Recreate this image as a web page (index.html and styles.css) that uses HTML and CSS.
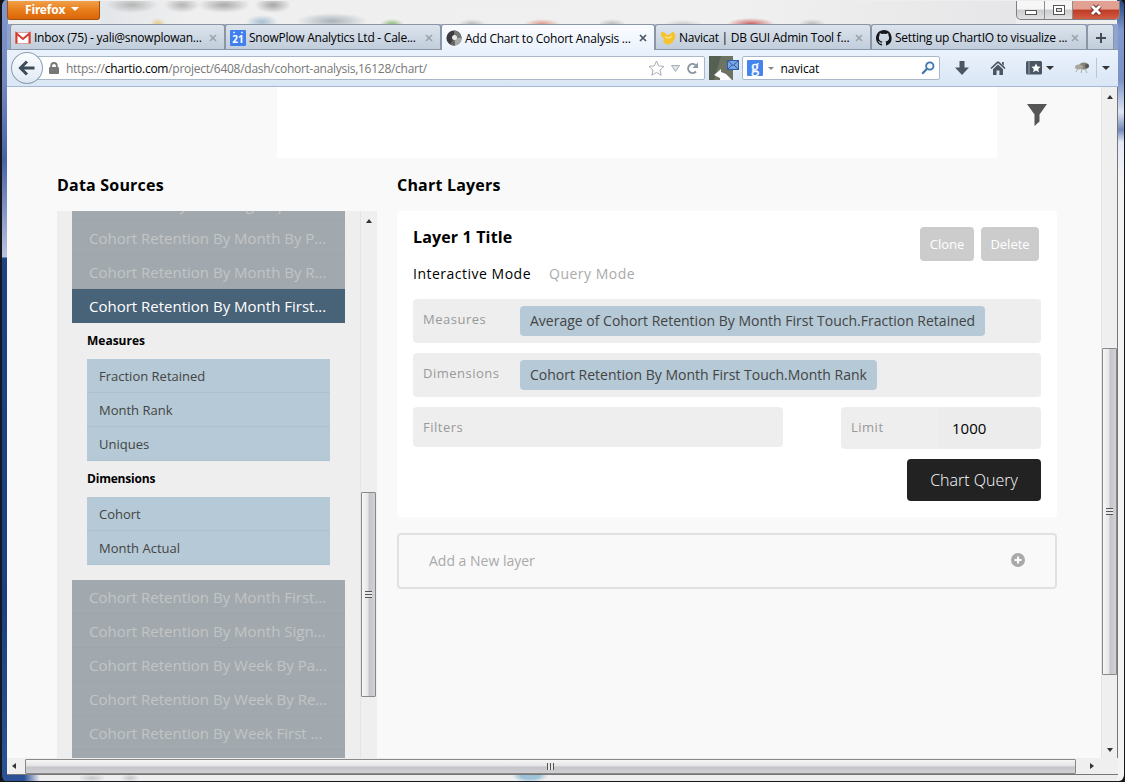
FILE: index.html
```html
<!DOCTYPE html>
<html lang="en">
<head>
<meta charset="utf-8">
<title>Add Chart to Cohort Analysis</title>
<link rel="stylesheet" href="styles.css">
</head>
<body>
<div class="window">
  <header class="titlebar">
    <div class="firefox-button">Firefox <i class="caret caret-white"></i></div>
    <div class="glass"></div>
    <div class="window-buttons">
      <span class="wb"><svg width="14" height="12" viewBox="0 0 14 12"><rect x="1.500" y="6.500" width="11" height="4" fill="#fff" stroke="#555"/></svg></span>
      <span class="wb"><svg width="14" height="12" viewBox="0 0 14 12"><rect x="1.500" y="1.500" width="11" height="9" fill="#fff" stroke="#555"/><rect x="4.500" y="4.500" width="5" height="3" fill="#ddd" stroke="#555"/></svg></span>
      <span class="wb wb-close"><svg width="14" height="12" viewBox="0 0 14 12"><path d="M3 2l8 8M11 2l-8 8" stroke="#6b3030" stroke-width="4.600"/><path d="M3 2l8 8M11 2l-8 8" stroke="#fff" stroke-width="2.800"/></svg></span>
    </div>
  </header>

  <nav class="tabs">
    <div class="tab">
      <svg width="16" height="16" viewBox="0 0 16 16"><rect x="0.500" y="2.500" width="15" height="11" fill="#fff" stroke="#d9a4a0"/><path d="M1.500 13.500v-10L8 9l6.500-5.500v10" fill="none" stroke="#d33f35" stroke-width="2"/></svg>
      <span class="tab-title">Inbox (75) - yali@snowplowan...</span><svg class="close" viewBox="0 0 8 8"><path d="M1 1l6 6M7 1l-6 6"/></svg>
    </div>
    <div class="tab">
      <svg width="16" height="16" viewBox="0 0 16 16"><rect width="16" height="16" rx="1" fill="#3f80ee"/><path d="M3 2.500h2M11 2.500h2" stroke="#cfe0ff" stroke-width="1.500"/><text x="8" y="13" text-anchor="middle" class="cal-day">21</text></svg>
      <span class="tab-title">SnowPlow Analytics Ltd - Cale...</span><svg class="close" viewBox="0 0 8 8"><path d="M1 1l6 6M7 1l-6 6"/></svg>
    </div>
    <div class="tab tab-active">
      <svg width="16" height="16" viewBox="0 0 16 16"><circle cx="8" cy="8" r="7.600" fill="#3c3c3e"/><path d="M8 8V.4A7.600 7.600 0 0 1 15.600 8z" fill="#777"/><path d="M8 8h7.600A7.600 7.600 0 0 1 9 15.500z" fill="#a9a9a9"/><path d="M8 8l1 7.500a7.600 7.600 0 0 1-5-1.200z" fill="#666"/><circle cx="8.500" cy="7.500" r="2.500" fill="#e8e8e8"/></svg>
      <span class="tab-title">Add Chart to Cohort Analysis ...</span><svg class="close" viewBox="0 0 8 8"><path d="M1 1l6 6M7 1l-6 6"/></svg>
    </div>
    <div class="tab">
      <svg width="16" height="16" viewBox="0 0 16 16"><path d="M1 2.500C3 1 5 2.500 6.500 4.500 9 5.500 11 4 12.500 1.500 14 2 15.500 4 15.300 6c-.3 4-3 8-7 8.500C4 14 2.500 11 4 8.500 2 8 .5 5 1 2.500z" fill="#f5c32c"/><path d="M5 6.500c2 2 5 2 7-.5" fill="none" stroke="#fbe38a" stroke-width="1.500"/></svg>
      <span class="tab-title">Navicat | DB GUI Admin Tool f...</span><svg class="close" viewBox="0 0 8 8"><path d="M1 1l6 6M7 1l-6 6"/></svg>
    </div>
    <div class="tab">
      <svg width="16" height="16" viewBox="0 0 16 16"><path fill="#14181c" d="M8 0C3.600 0 0 3.600 0 8c0 3.500 2.300 6.500 5.500 7.600.4.100.5-.2.500-.4v-1.500c-2.200.5-2.700-1-2.700-1-.4-.9-.9-1.200-.9-1.200-.7-.5.100-.5.100-.5.800.1 1.200.8 1.200.8.700 1.200 1.900.9 2.300.7.100-.5.300-.9.500-1.100-1.800-.2-3.600-.9-3.600-4 0-.9.300-1.600.8-2.100-.1-.2-.4-1 .1-2.100 0 0 .7-.2 2.200.8a7.500 7.500 0 0 1 4 0c1.500-1 2.200-.8 2.200-.8.400 1.100.2 1.900.1 2.100.5.600.8 1.300.8 2.100 0 3.100-1.900 3.700-3.700 3.900.3.300.6.800.6 1.500v2.200c0 .2.100.5.600.4A8 8 0 0 0 8 0z"/></svg>
      <span class="tab-title">Setting up ChartIO to visualize ...</span><svg class="close" viewBox="0 0 8 8"><path d="M1 1l6 6M7 1l-6 6"/></svg>
    </div>
    <div class="tab tab-new"><svg width="12" height="12" viewBox="0 0 12 12"><path d="M6 1v10M1 6h10" stroke="#444c56" stroke-width="2"/></svg></div>
  </nav>

  <div class="toolbar">
    <div class="back"><svg width="18" height="16" viewBox="0 0 18 16"><path d="M9 1.500L2.500 8 9 14.500M3 8h13.500" fill="none" stroke="#3d4a57" stroke-width="3"/></svg></div>
    <div class="url">
      <svg width="10" height="12" viewBox="0 0 10 12"><path d="M2.200 6V3.800a2.800 2.800 0 0 1 5.600 0V6" fill="none" stroke="#777" stroke-width="1.800"/><rect y="5" width="10" height="7" rx="1" fill="#777"/></svg>
      <span class="address">https://<b>chartio.com</b>/project/6408/dash/cohort-analysis,16128/chart/</span>
      <svg width="17" height="16" viewBox="0 0 17 16"><path d="M8.500 1l2.200 4.900 5.300.5-4 3.600 1.200 5.200-4.700-2.800-4.700 2.800L5 10 1 6.400l5.300-.5z" fill="#fff" stroke="#a9afb6"/></svg>
      <svg width="9" height="7" viewBox="0 0 9 7"><path d="M.5.500h8l-4 6z" fill="#dfe3e7" stroke="#a5adb5"/></svg>
      <svg width="13" height="13" viewBox="0 0 13 13"><path d="M10 9.500A4.500 4.500 0 1 1 9.500 3" fill="none" stroke="#8b97a3" stroke-width="2"/><path d="M12 .5v5.500H6.500z" fill="#8b97a3"/></svg>
    </div>
    <svg class="page-icon" width="30" height="24" viewBox="0 0 30 24"><rect width="24" height="24" fill="#6c7461"/><path d="M0 0h12L5 24H0z" fill="#566052"/><path d="M5 19l7-6v3l5 2 6 6H11v-2z" fill="#fff"/><rect x="18.500" y="4.500" width="11" height="9" fill="#7aa5e3" stroke="#2f5ca6"/><path d="M19 5l5 4.500L29 5M19 13l4-4M29 13l-4-4" fill="none" stroke="#2f5ca6"/></svg>
    <div class="search">
      <svg width="16" height="16" viewBox="0 0 16 16"><rect width="16" height="16" rx="1" fill="#4583ed"/><text x="8" y="12" text-anchor="middle" class="g-letter">g</text></svg>
      <i class="caret caret-grey"></i>
      <span class="query">navicat</span>
      <svg width="14" height="14" viewBox="0 0 14 14"><circle cx="8.800" cy="5" r="3.700" fill="#f4f9ff" stroke="#3f76ad" stroke-width="1.800"/><path d="M6 7.800L1.200 12.800" stroke="#3f76ad" stroke-width="2.200"/></svg>
    </div>
    <div class="actions">
      <svg width="14" height="14" viewBox="0 0 14 14"><path d="M4.500 0h5v6.500H14L7 14 0 6.500h4.500z" fill="#4c5663"/></svg>
      <svg width="16" height="14" viewBox="0 0 16 14"><path d="M8 .8L1 7.500M8 .8L15 7.500" stroke="#4c5663" stroke-width="1.700"/><path d="M8 3.500L3 8.300V14h3.600V9.500h2.800V14H13V8.300zM12 1h1.800v4L12 3z" fill="#4c5663"/></svg>
      <svg width="17" height="14" viewBox="0 0 17 14"><rect width="16" height="13.500" rx="1.500" fill="#4c5663"/><path d="M3 0v14" stroke="#99a2ad"/><path d="M10 2.500l1.400 3 3.200.3-2.400 2.200.7 3.200L10 9.600l-2.900 1.600.7-3.200-2.400-2.200 3.200-.3z" fill="#fff"/></svg>
      <i class="caret"></i>
      <svg class="fly" width="16" height="14" viewBox="0 0 16 14"><ellipse cx="10" cy="5" rx="5" ry="3.500" fill="#85827c"/><ellipse cx="5" cy="6" rx="4" ry="2.500" fill="#aaa59d"/><circle cx="13" cy="5" r="2" fill="#555"/><path d="M4 7l-2 4M8 8l-1 4M11 8l2 4" stroke="#b0ada6"/></svg>
      <span class="divider"></span>
      <i class="caret"></i>
    </div>
  </div>

  <div class="viewport">
    <main class="page">
      <div class="preview-row">
        <div class="preview"></div>
        <svg class="funnel" width="20" height="22" viewBox="0 0 20 22"><path d="M0 0h20l-7.500 10.500v7L7.500 22V10.500z" fill="#555"/></svg>
      </div>
      <div class="columns">
        <section class="sources">
          <h2>Data Sources</h2>
          <div class="source-panel">
            <div class="source-list">
              <div class="tables tables-above">
                <div class="table">Cohort Dfn By Week Sign Up...</div>
                <div class="table">Cohort Retention By Month By P...</div>
                <div class="table">Cohort Retention By Month By R...</div>
              </div>
              <div class="table table-selected">Cohort Retention By Month First...</div>
              <h4>Measures</h4>
              <ul><li>Fraction Retained</li><li>Month Rank</li><li>Uniques</li></ul>
              <h4 class="dims">Dimensions</h4>
              <ul><li>Cohort</li><li>Month Actual</li></ul>
              <div class="tables tables-below">
                <div class="table">Cohort Retention By Month First...</div>
                <div class="table">Cohort Retention By Month Sign...</div>
                <div class="table">Cohort Retention By Week By Pa...</div>
                <div class="table">Cohort Retention By Week By Re...</div>
                <div class="table">Cohort Retention By Week First ...</div>
                <div class="table"></div>
              </div>
            </div>
            <div class="vscroll inner">
              <i class="arrow up"></i>
              <div class="thumb"><i class="grip"></i></div>
            </div>
          </div>
        </section>
        <section class="layers">
          <h2>Chart Layers</h2>
          <div class="card">
            <div class="card-head">
              <h3>Layer 1 Title</h3>
              <span class="btn clone">Clone</span><span class="btn delete">Delete</span>
            </div>
            <div class="modes"><span>Interactive Mode</span><span class="off">Query Mode</span></div>
            <div class="field"><label>Measures</label><span class="pill p1">Average of Cohort Retention By Month First Touch.Fraction Retained</span></div>
            <div class="field"><label>Dimensions</label><span class="pill p2">Cohort Retention By Month First Touch.Month Rank</span></div>
            <div class="field-row">
              <div class="field filters"><label>Filters</label></div>
              <div class="field limit"><label>Limit</label><span class="value">1000</span></div>
            </div>
            <div class="submit">Chart Query</div>
          </div>
          <div class="add-layer"><span>Add a New layer</span>
            <svg width="14" height="14" viewBox="0 0 14 14"><circle cx="7" cy="7" r="7" fill="#aaa"/><path d="M7 3.500v7M3.500 7h7" stroke="#fff" stroke-width="2"/></svg>
          </div>
        </section>
      </div>
    </main>
    <div class="vscroll outer">
      <i class="arrow up"></i>
      <div class="thumb"><i class="grip"></i></div>
      <i class="arrow down"></i>
    </div>
  </div>
  <div class="hscroll">
    <i class="arrow left"></i>
    <div class="hthumb"><i class="grip grip-h"></i></div>
    <i class="arrow right"></i>
  </div>
</div>
</body>
</html>
```

FILE: styles.css
```css
* { box-sizing: border-box; }
body {
  margin: 0;
  width: 1125px;
  height: 782px;
  overflow: hidden;
  background: #15171d;
  font-family: "Open Sans", sans-serif;
  color: #000;
}
svg { display: block; flex: none; }
h2, h3, h4, ul { margin: 0; padding: 0; list-style: none; }

/* window frame */
.window {
  width: 1125px;
  height: 781px;
  display: flex;
  flex-direction: column;
  padding: 1px 6px 0 5px;
  border: 0 solid #15171d;
  border-width: 0 1px 0 2px;
  border-radius: 6px;
  background:
    linear-gradient(90deg, #2b5297 0 22px, transparent 38px) 0 100% / 100% 6px no-repeat,
    radial-gradient(ellipse 18px 6px at 528px 1px, #9cc3d8 50%, transparent) 0 100% / 100% 6px no-repeat,
    radial-gradient(ellipse 14px 4px at 90px 3px, #c4c6ca, transparent) 0 100% / 100% 6px no-repeat,
    radial-gradient(ellipse 10px 4px at 128px 3px, #c4c6ca, transparent) 0 100% / 100% 6px no-repeat,
    linear-gradient(#8196cb 0, #7489c2 80px, #4763a6 160px, #bcc2e0 257px, #1c4484 258px, #1c3f83 600px, #2b5297 100%) 0 0 / 6px 100% no-repeat,
    linear-gradient(#23447f 0, #8199cd 30px, #7b92c8 80px, #dde6f5 112px, #7088b6 130px, #e4eaf5 142px, #f3f4f6 180px, #f3f3f3 100%) 100% 0 / 7px 100% no-repeat,
    #eeeeee;
  background-clip: padding-box;
}

.titlebar {
  height: 23px;
  display: flex;
  align-items: flex-start;
  justify-content: space-between;
  font-family: "Noto Sans", sans-serif;
}
.firefox-button {
  width: 93px;
  height: 19px;
  display: flex;
  align-items: center;
  gap: 6px;
  padding: 0 0 2px 17px;
  border: 1px solid #a5500d;
  border-top: 0;
  border-radius: 0 0 3px 3px;
  background: linear-gradient(#f0a04a, #e87d1b 50%, #da6608);
  color: #fff;
  font-size: 12px;
  font-weight: 700;
  letter-spacing: -0.15px;
  white-space: nowrap;
}
.glass {
  flex: 1;
  align-self: stretch;
  background:
    radial-gradient(ellipse 26px 8px at 32px 4px, #b5b5b5, transparent),
    radial-gradient(ellipse 18px 8px at 82px 4px, #b5b5b5, transparent),
    radial-gradient(ellipse 26px 8px at 124px 4px, #aaa, transparent),
    radial-gradient(ellipse 18px 8px at 173px 4px, #a6a6a6, transparent),
    radial-gradient(ellipse 16px 7px at 162px 21px, #a5bfd2, transparent),
    radial-gradient(ellipse 8px 6px at 58px 23px, #e5cc82, transparent),
    radial-gradient(ellipse 36px 8px at 232px 20px, #a9b3ba, transparent),
    radial-gradient(ellipse 12px 5px at 292px 23px, #8fba77, transparent),
    radial-gradient(ellipse 14px 5px at 372px 23px, #bbb, transparent),
    radial-gradient(ellipse 18px 5px at 442px 23px, #dc9789, transparent),
    radial-gradient(ellipse 14px 5px at 512px 23px, #bbb, transparent),
    radial-gradient(ellipse 20px 4px at 583px 23px, #ccc, transparent),
    radial-gradient(ellipse 24px 6px at 651px 23px, #c9605e, transparent),
    radial-gradient(ellipse 14px 5px at 712px 23px, #bbb, transparent),
    linear-gradient(90deg, #e3e6ea, #efefef 90px, #f0f0f0 70%, #e6e6e8);
}
.window-buttons {
  display: flex;
  height: 19px;
  margin-right: -2px;
  border: 1px solid #7b7f86;
  border-top: 0;
  border-radius: 0 0 5px 5px;
  overflow: hidden;
  background: linear-gradient(#f6f6f6 45%, #cbcccf 50%, #e2e2e3);
}
.wb { width: 28px; display: flex; align-items: center; justify-content: center; border-right: 1px solid #8b8e94; }
.wb-close { width: 46px; border: 0; background: linear-gradient(#e2a092 45%, #c03b27 50%, #d25c41); }

/* tabs */
.tabs { display: flex; height: 26px; padding-left: 3px; background: linear-gradient(90deg, #8fa3cf, #aeb8ce 40%, #d5d6db 92%, #8fa2cf); border-bottom: 1px solid #8a96a5; }
.tab {
  display: flex;
  align-items: center;
  flex: none;
  width: 216px;
  height: 25px;
  padding: 1px 7px 0 4px;
  gap: 3px;
  border: 1px solid #8a96a5;
  border-bottom: 0;
  border-radius: 3px 3px 0 0;
  background: linear-gradient(#dce4ed, #c1cddb);
  font-size: 12px;
}
.tab:first-child { width: 215px; }
.tab:nth-child(3) { width: 214px; }
.tab-active { height: 26px; background: linear-gradient(#fafcff, #eaf2fc); }
.tab-new { width: 27px; justify-content: center; padding: 1px 0 0; }
.tab-title { flex: 1; white-space: nowrap; letter-spacing: -0.24px; }
.close { width: 8px; height: 8px; fill: none; stroke: #9aa3ad; stroke-width: 1.7; }
.tab-active .close { stroke: #4c5561; }
.cal-day { font: 700 10px "Open Sans", sans-serif; fill: #fff; }
.g-letter { font: 16px "Liberation Serif", serif; fill: #fff; stroke: #fff; stroke-width: 0.4px; }

/* toolbar */
.toolbar {
  display: flex;
  align-items: center;
  height: 37px;
  padding: 0 8px 0 4px;
  background: linear-gradient(#eaf2fc, #d9e6f5);
  border-bottom: 1px solid #a4b8d4;
  font-size: 12px;
}
.back {
  position: relative;
  z-index: 1;
  width: 32px;
  height: 32px;
  display: flex;
  align-items: center;
  justify-content: center;
  border: 1px solid #8c9db1;
  border-radius: 50%;
  background: linear-gradient(#fbfdff, #dfe9f4);
}
.url, .search { display: flex; align-items: center; height: 24px; background: #fff; border: 1px solid #a9b8c9; border-radius: 2px; }
.url { width: 680px; margin-left: -16px; padding: 0 5px 0 21px; gap: 6px; }
.address { flex: 1; margin-left: 1px; color: #777; white-space: nowrap; letter-spacing: -0.27px; }
.address b { color: #000; font-weight: 400; }
.page-icon { margin: 0 3px 0 4px; }
.search { width: 198px; padding: 0 4px; gap: 5px; }
.query { flex: 1; margin-left: 1px; letter-spacing: -0.15px; }
.actions { display: flex; align-items: center; flex: 1; padding-left: 15px; }
.actions svg:nth-child(2) { margin-left: 21px; }
.actions svg:nth-child(3) { margin: 0 3px 0 20px; }
.actions .fly { margin: 0 6px 0 20px; }
.divider { width: 1px; height: 20px; margin-right: 5px; background: #b9c6d6; }
.caret { width: 0; height: 0; border: 4px solid transparent; border-top-color: #333; border-bottom: 0; }
.caret-white { border-top-color: #fff; }
.caret-grey { border-width: 3px; border-bottom: 0; border-top-color: #888; }

/* page */
.viewport { display: flex; height: 671px; background: #f9f9f9; }
.page { flex: 1; overflow: hidden; }
.preview-row { display: flex; align-items: flex-start; height: 71px; padding-left: 270px; }
.preview { width: 720px; height: 71px; background: #fff; }
.funnel { margin: 17px 0 0 30px; }
.columns { display: flex; gap: 20px; padding-left: 50px; }
h2 { height: 53px; padding-top: 15px; font-size: 16px; line-height: 24px; font-weight: 700; letter-spacing: 0.2px; }
.sources { width: 320px; }
.source-panel { display: flex; height: 547px; overflow: hidden; background: #eee; }
.source-list { width: 303px; padding: 0 15px; }
.tables { background: #a1a9af; color: #c3c4c4; }
.tables-above { height: 78px; display: flex; flex-direction: column; justify-content: flex-end; overflow: hidden; }
.tables-below { margin-top: 15px; }
.table { flex: none; height: 34px; padding-left: 17px; border-bottom: 1px solid #9da5ab; font-size: 15px; line-height: 34px; white-space: nowrap; }
.table-selected { background: #486277; border: 0; color: #fff; }
h4 { height: 36px; padding-left: 15px; font-size: 12px; line-height: 36px; }
.dims { letter-spacing: -0.2px; }
.source-list ul { margin: 0 15px; background: #b5c9d6; }
.source-list li { height: 34px; padding-left: 12px; border-bottom: 1px solid #adc2d0; font-size: 13px; line-height: 35px; color: #444; }

.layers { width: 660px; }
.card { height: 306px; padding: 15px 16px 16px; background: #fff; border-radius: 4px; }
.card-head { display: flex; height: 35px; }
h3 { flex: 1; font-size: 16px; line-height: 22px; letter-spacing: 0.15px; }
.btn { height: 34px; margin-top: 1px; border-radius: 4px; background: #ccc; color: #fff; font-size: 13px; line-height: 35px; text-align: center; }
.clone { width: 54px; margin-right: 7px; }
.delete { width: 58px; margin-right: 2px; }
.modes { display: flex; gap: 18px; height: 38px; font-size: 14px; line-height: 25px; letter-spacing: 0.5px; }
.off { color: #aaa; }
.field { display: flex; height: 44px; margin-bottom: 10px; padding: 7px 10px; border-radius: 4px; background: #eee; }
.field label { width: 97px; font-size: 13px; line-height: 26px; letter-spacing: 0.5px; color: #999; }
.pill { height: 30px; padding: 0 10px; border-radius: 4px; background: #b5c9d6; color: #444; font-size: 14px; line-height: 30px; white-space: nowrap; }
.p1 { width: 465px; }
.p2 { width: 357px; }
.field-row { display: flex; justify-content: space-between; align-items: flex-start; height: 52px; }
.filters { width: 370px; height: 40px; }
.limit { width: 200px; height: 42px; background: linear-gradient(90deg, #eee 97px, #ececec 97px); }
.limit label { width: 101px; }
.value { font-size: 15px; line-height: 28px; }
.submit { width: 134px; height: 42px; margin-left: auto; border-radius: 4px; background: #222; color: #fff; font-size: 16px; font-weight: 300; line-height: 42px; text-align: center; }
.add-layer { display: flex; align-items: center; justify-content: space-between; height: 56px; margin-top: 16px; padding: 0 30px 2px; border: 2px solid #e1e1e1; border-radius: 4px; color: #aaa; font-size: 14px; }

/* scrollbars */
.vscroll { display: flex; flex-direction: column; align-items: center; flex: none; background: #efefef; border-left: 1px solid #e4e4e4; }
.inner { width: 17px; padding-right: 1px; }
.outer { width: 17px; height: 672px; border-right: 1px solid #777; }
.thumb { display: flex; align-items: center; justify-content: center; width: 15px; border: 1px solid #888; border-radius: 1px; background: linear-gradient(90deg, #f6f6f6, #e6e6e8 45%, #c4c4ca 55%, #d2d2d6); }
.inner .thumb { height: 205px; margin-top: 267px; }
.outer .thumb { height: 327px; margin-top: 247px; margin-bottom: 73px; }
.grip { width: 7px; height: 7px; background: repeating-linear-gradient(#555 0 1px, #e8e8e8 1px 3px); }
.grip-h { width: 7px; height: 7px; background: repeating-linear-gradient(90deg, #555 0 1px, #e8e8e8 1px 3px); }
.arrow { flex: none; width: 0; height: 0; border: 3.5px solid transparent; }
.up { margin-top: 8px; border-top: 0; border-bottom: 4px solid #333; margin-bottom: 2px; }
.down { border-bottom: 0; border-top: 4px solid #333; }
.left { border-left: 0; border-right: 4px solid #333; margin: 0 9px 0 5px; }
.right { border-right: 0; border-left: 4px solid #333; margin-left: 14px; }
.hscroll { display: flex; align-items: center; height: 17px; background: #efefef; border-bottom: 1px solid #777; }
.hthumb { display: flex; align-items: center; justify-content: center; width: 1051px; height: 15px; border: 1px solid #888; border-radius: 1px; background: linear-gradient(#f6f6f6, #e4e4e6 45%, #c4c4ca 55%, #d0d0d4); }
```
